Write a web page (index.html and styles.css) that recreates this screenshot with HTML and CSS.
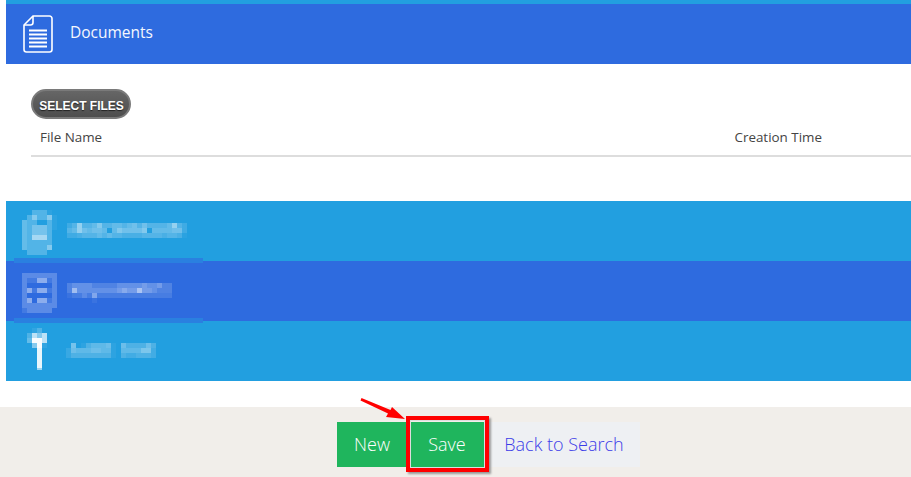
FILE: index.html
```html
<!DOCTYPE html>
<html lang="en">
<head>
<meta charset="utf-8">
<title>Documents</title>
<link rel="stylesheet" href="styles.css">
</head>
<body>
<main class="panel">
  <header class="panel-head">
    <svg class="doc-icon" width="30" height="38" viewBox="0 0 30 38" fill="none" stroke="#fff">
      <path stroke-width="1.600" d="M10 1H26.500a2.500 2.500 0 0 1 2.500 2.500v31a2.500 2.500 0 0 1-2.500 2.500H3.500a2.500 2.500 0 0 1-2.500-2.500V10z"/>
      <path stroke-width="1.600" d="M10 1v6.500a2.500 2.500 0 0 1-2.500 2.500H1"/>
      <path stroke-width="1.800" d="M6 15.500h18M6 19.500h18M6 23.500h18M6 27.500h18M6 31.500h18"/>
    </svg>
    <h1 class="panel-title">Documents</h1>
  </header>
  <section class="files">
    <button class="select-btn" type="button">SELECT FILES</button>
    <div class="file-table">
      <span>File Name</span>
      <span>Creation Time</span>
    </div>
  </section>
  <nav class="tiles">
    <div class="tile tile-sky">
      <svg class="m-icon" width="35" height="45" viewBox="0 0 35 45" fill="none" stroke="#fff" stroke-width="5" shape-rendering="crispEdges">
        <path stroke-opacity=".22" d="M10 2.500h15M5 7.500h5M15 7.500h10M5 12.500h5M10 12.500h5M25 12.500h5M5 17.500h5M25 17.500h5M5 22.500h5M25 22.500h5M5 27.500h5M25 27.500h5M5 32.500h25M5 37.500h5M10 37.500h15M5 42.500h20"/>
        <path stroke-opacity=".05" d="M25 2.500h5M30 7.500h5M30 12.500h5M30 17.500h5"/>
        <path stroke-opacity=".3" d="M0 12.500h5M0 17.500h5M0 22.500h5M0 27.500h5M0 32.500h5M0 37.500h5"/>
        <path stroke-opacity=".38" d="M10 17.500h15M10 22.500h15"/>
        <path stroke-opacity=".45" d="M10 7.500h5M25 7.500h5M25 37.500h5"/>
        <path stroke-opacity=".6" d="M10 27.500h15"/>
      </svg>
      <svg class="m-text" width="120" height="15" viewBox="0 0 120 15" fill="none" stroke="#fff" stroke-width="5" shape-rendering="crispEdges">
        <path stroke-opacity=".04" d="M0 2.500h120M0 7.500h40M45 7.500h35M85 7.500h35M0 12.500h120"/>
        <path stroke-opacity=".1" d="M0 2.500h5M115 2.500h5M115 7.500h5M0 12.500h10"/>
        <path stroke-opacity=".15" d="M10 12.500h5M55 12.500h20M95 12.500h5M110 12.500h5"/>
        <path stroke-opacity=".2" d="M5 2.500h5M15 2.500h10M35 2.500h10M55 2.500h5M70 2.500h5M80 2.500h20M110 2.500h5M0 7.500h5M15 12.500h15M35 12.500h5M45 12.500h10M75 12.500h20M100 12.500h10"/>
        <path stroke-opacity=".27" d="M25 2.500h5M45 2.500h10M60 2.500h5M100 2.500h5M5 7.500h5M20 7.500h5M35 7.500h5M45 7.500h5M85 7.500h20M30 12.500h5M40 12.500h5"/>
        <path stroke-opacity=".33" d="M65 2.500h5M75 2.500h5M15 7.500h5M25 7.500h10M55 7.500h20M105 7.500h10"/>
        <path stroke-opacity=".42" d="M30 2.500h5M50 7.500h5M75 7.500h5"/>
        <path stroke-opacity=".5" d="M10 2.500h5M10 7.500h5M105 2.500h5"/>
      </svg>
    </div>
    <div class="tile tile-blue">
      <svg class="m-icon" width="35" height="40" viewBox="0 0 35 40" fill="none" stroke="#fff" stroke-width="5" shape-rendering="crispEdges">
        <path stroke-opacity=".22" d="M0 2.500h35M0 7.500h5M30 7.500h5M0 12.500h5M30 12.500h5M0 17.500h5M30 17.500h5M0 22.500h5M30 22.500h5M0 27.500h5M30 27.500h5M0 32.500h35M5 37.500h25"/>
        <path stroke-opacity=".1" d="M5 7.500h10M25 7.500h5M0 37.500h5M25 27.500h5M10 17.500h5M25 17.500h5"/>
        <path stroke-opacity=".45" d="M15 7.500h10M15 17.500h10M5 17.500h5M15 27.500h10M5 27.500h5"/>
      </svg>
      <svg class="m-text" width="105" height="20" viewBox="0 0 105 20" fill="none" stroke="#fff" stroke-width="5" shape-rendering="crispEdges">
        <path stroke-opacity=".05" d="M0 2.500h105M0 7.500h105"/>
        <path stroke-opacity=".06" d="M0 12.500h5M25 17.500h5"/>
        <path stroke-opacity=".12" d="M0 2.500h5M0 7.500h5M5 12.500h10M25 2.500h25M45 12.500h45M90 12.500h15M95 2.500h10M90 7.500h15M20 12.500h5M30 12.500h15"/>
        <path stroke-opacity=".22" d="M5 2.500h20M50 2.500h15M5 7.500h25M15 12.500h5M30 7.500h15M65 2.500h10M80 2.500h10M45 7.500h5M85 7.500h5"/>
        <path stroke-opacity=".3" d="M50 7.500h5M60 7.500h10M75 7.500h10M75 2.500h5M90 2.500h5"/>
        <path stroke-opacity=".4" d="M5 7.500h5M25 12.500h5M55 7.500h5"/>
        <path stroke-opacity=".58" d="M70 7.500h5"/>
      </svg>
    </div>
    <div class="tile tile-sky">
      <svg class="m-pin" width="20" height="42" viewBox="0 0 20 42" fill="none" stroke="#fff" stroke-width="5" shape-rendering="crispEdges">
        <path stroke-opacity=".07" d="M5 2.500h5M15 17.500h5"/>
        <path stroke-opacity=".2" d="M0 7.500h5M10 2.500h5"/>
        <path stroke-opacity=".3" d="M0 12.500h5"/>
        <path stroke-opacity=".45" d="M10 7.500h5M5 17.500h5"/>
        <path stroke-opacity=".7" d="M5 7.500h5M15 7.500h5M15 12.500h5"/>
        <path stroke-opacity=".97" d="M5 12.500h10M10 17.500h5"/>
        <path stroke-opacity=".9" d="M10 22.500h5M10 27.500h5M10 32.500h5M10 37.500h5"/>
        <path stroke-opacity=".55" stroke-width="2" d="M10 41h5"/>
      </svg>
      <svg class="m-text" width="95" height="15" viewBox="0 0 95 15" fill="none" stroke="#fff" stroke-width="5" shape-rendering="crispEdges">
        <path stroke-opacity=".05" d="M5 7.500h45M55 7.500h35M5 12.500h45M55 12.500h35M15 2.500h35M55 2.500h35"/>
        <path stroke-opacity=".1" d="M0 7.500h5M0 12.500h5M85 7.500h5M85 12.500h5M60 12.500h10"/>
        <path stroke-opacity=".16" d="M20 2.500h5M35 12.500h10M60 2.500h20M5 12.500h30M55 12.500h5M70 12.500h15M85 2.500h5"/>
        <path stroke-opacity=".24" d="M10 7.500h15M35 7.500h10M55 7.500h5M60 7.500h15M30 2.500h10M25 2.500h5"/>
        <path stroke-opacity=".3" d="M40 2.500h5M25 7.500h10M55 2.500h5M80 2.500h5M5 7.500h5"/>
        <path stroke-opacity=".38" d="M5 2.500h5M75 7.500h10"/>
      </svg>
    </div>
  </nav>
</main>
<footer class="actions">
  <button class="act act-new" type="button">New</button>
  <button class="act act-save" type="button">Save</button>
  <button class="act act-back" type="button">Back to Search</button>
  <div class="callout"></div>
  <svg class="arrow" width="46" height="24" viewBox="0 0 46 24">
    <path fill="#f00" d="M1.500 1 30.500 13 32 10 45 22 26 20 28 16.500.5 3.500z"/>
  </svg>
</footer>
</body>
</html>
```
FILE: styles.css
```css
html, body {
  margin: 0;
  padding: 0;
  background: #fff;
}
body {
  height: 477px;
  overflow: hidden;
  font-family: "Open Sans", "Liberation Sans", sans-serif;
}
.panel {
  margin-left: 6px;
}
.panel-head {
  display: flex;
  align-items: center;
  gap: 17px;
  height: 60px;
  padding-left: 17px;
  border-top: 4px solid #229fe0;
  background: #2e6bdf;
}
.doc-icon {
  flex: none;
}
.panel-title {
  margin: 0;
  padding-bottom: 4px;
  font-size: 15.5px;
  font-weight: 400;
  color: #f4f7fe;
}
.files {
  padding: 25px 0 0 25px;
  height: 112px;
}
.select-btn {
  display: block;
  width: 100px;
  height: 30px;
  padding: 3px 0 0 1px;
  border: 2px solid #7a7a7a;
  border-radius: 15px;
  background: linear-gradient(#666, #4e4e4e);
  font-family: "Liberation Sans", Arial, sans-serif;
  font-size: 12px;
  font-weight: 700;
  color: #fff;
  text-shadow: 0 1px 1px #222;
}
.file-table {
  display: grid;
  grid-template-columns: 694.500px 1fr;
  height: 36px;
  padding-left: 9px;
  border-bottom: 2px solid #ddd;
  font-size: 13.400px;
  line-height: 36px;
  color: #444;
}
.tile {
  position: relative;
  display: flex;
  align-items: flex-start;
  height: 60px;
}
.tile-sky {
  background: #229fe0;
}
.tile-blue {
  background: #2e6bdf;
}
.tile:not(:last-child)::after {
  content: "";
  position: absolute;
  left: 8px;
  top: 57px;
  width: 189px;
  height: 5px;
  background: #2a80e0;
  z-index: 1;
}
.m-icon {
  flex: none;
  margin: 9px 0 0 16px;
}
.tile-blue .m-icon {
  margin-top: 12px;
}
.m-text {
  flex: none;
  margin: 22px 0 0 10px;
}
.m-pin {
  flex: none;
  margin: 7px 0 0 21px;
}
.tile-sky .m-pin + .m-text {
  margin-left: 19px;
}
.actions {
  position: relative;
  display: flex;
  align-items: flex-start;
  height: 55px;
  margin-top: 26px;
  padding: 15px 0 0 337px;
  background: #f1eeea;
}
.act {
  height: 45px;
  padding: 0 0 2px;
  border: 0;
  font-family: inherit;
  font-size: 18px;
  font-weight: 300;
  color: #fff;
}
.act-new {
  width: 70px;
  background: #1fb55d;
}
.act-save {
  width: 80px;
  background: #1fb55d;
}
.act-back {
  width: 150px;
  margin-left: 3px;
  padding-right: 2px;
  background: #eef0f3;
  color: #3c3ce8;
}
.callout {
  position: absolute;
  left: 406px;
  top: 9px;
  width: 75px;
  height: 48px;
  border: 4px solid #f00;
  outline: 1px solid #ddd;
  outline-offset: -5px;
  box-shadow: 2px 2px 2px #999;
}
.arrow {
  position: absolute;
  left: 360px;
  top: -10px;
}
```
